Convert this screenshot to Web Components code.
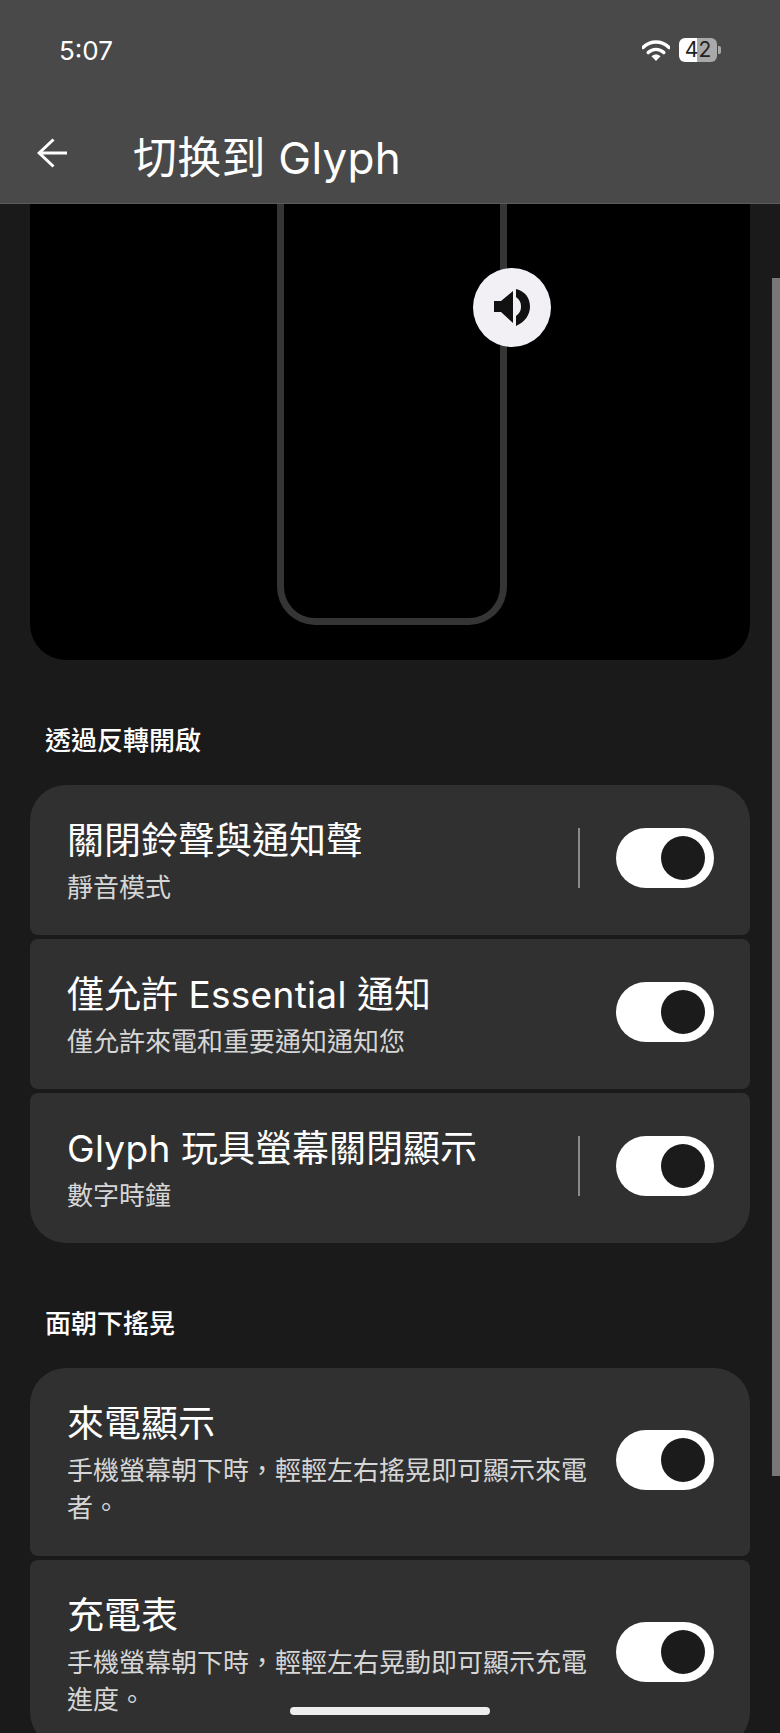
<!DOCTYPE html>
<html lang="zh-Hant">
<head>
<meta charset="utf-8">
<title>切换到 Glyph</title>
<style>
  html, body { margin: 0; padding: 0; background: #1a1a1a; }
  body { width: 780px; height: 1733px; overflow: hidden; position: relative;
    font-family: Inter, "Noto Sans CJK TC", sans-serif; color: #fff; }
  main { display: block; padding: 0 30px; }
  .en { letter-spacing: .3px; }
</style>
</head>
<body>
<top-bar heading="切换到 Glyph" time="5:07" battery="42"></top-bar>
<main>
  <hero-preview></hero-preview>

  <section-label>透過反轉開啟</section-label>
  <setting-row pos="first" divider>
    <span slot="title">關閉鈴聲與通知聲</span>
    <span slot="sub">靜音模式</span>
  </setting-row>
  <setting-row>
    <span slot="title">僅允許 <span class="en">Essential</span> 通知</span>
    <span slot="sub">僅允許來電和重要通知通知您</span>
  </setting-row>
  <setting-row pos="last" divider>
    <span slot="title"><span class="en">Glyph</span> 玩具螢幕關閉顯示</span>
    <span slot="sub">數字時鐘</span>
  </setting-row>

  <section-label>面朝下搖晃</section-label>
  <setting-row pos="first" tall>
    <span slot="title">來電顯示</span>
    <span slot="sub">手機螢幕朝下時，輕輕左右搖晃即可顯示來電者。</span>
  </setting-row>
  <setting-row pos="last" tall>
    <span slot="title">充電表</span>
    <span slot="sub">手機螢幕朝下時，輕輕左右晃動即可顯示充電進度。</span>
  </setting-row>
</main>
<scroll-thumb></scroll-thumb>
<home-pill></home-pill>

<script>
(function(){
  class topBar extends HTMLElement {
    connectedCallback () {
      const root = this.attachShadow({mode: 'open'});
      root.innerHTML = `
        <style>
        :host { display: block; height: 204px; background: #494949; border-bottom: 1px solid #5c5c5c; box-sizing: border-box; color: #fff; position: relative; z-index: 2; }
        .status { height: 100px; display: flex; align-items: center; justify-content: space-between; padding: 0 59px 0 59px; box-sizing: border-box; }
        .time { font-size: 26px; line-height: 30px; padding-top: 2px; }
        .icons { display: flex; align-items: center; gap: 9px; }
        .battery { width: 38px; height: 24px; border-radius: 6px; display: flex; align-items: center; justify-content: center;
          background: linear-gradient(90deg, #fff 0 18px, #a9a9a9 18px); color: #222; font-size: 21px; line-height: 24px; }
        .tip { width: 3px; height: 8px; background: #a9a9a9; border-radius: 0 2px 2px 0; margin-left: -8px; }
        .bar { height: 103px; display: flex; align-items: flex-start; padding: 28px 0 0 37px; box-sizing: border-box; }
        .bar svg { flex: none; display: block; margin-top: 10px; }
        h1 { margin: 0 0 0 66px; font-size: 44px; line-height: 60px; font-weight: 400; white-space: nowrap; letter-spacing: .25px; }
        </style>
        <div class="status">
          <span class="time">${this.getAttribute('time')}</span>
          <span class="icons">
            <svg width="28" height="21" viewBox="0 0 28 21">
              <path d="M1 7.5C8.5 .2 19.5 .2 27 7.5" fill="none" stroke="#fff" stroke-width="3.4" stroke-linecap="round"/>
              <path d="M6.2 12.6c4.6-4.3 11-4.3 15.6 0" fill="none" stroke="#fff" stroke-width="3.4" stroke-linecap="round"/>
              <path d="M9.5 16.2c2.8-2.2 6.2-2.2 9 0L14 21z" fill="#fff"/>
            </svg>
            <span class="battery">${this.getAttribute('battery')}</span>
            <span class="tip"></span>
          </span>
        </div>
        <div class="bar">
          <svg width="30" height="30" viewBox="0 0 30 30">
            <path d="M16.5 1.5 2.2 15l14.3 13.5M2.2 15H30" fill="none" stroke="#fff" stroke-width="3"/>
          </svg>
          <h1>${this.getAttribute('heading')}</h1>
        </div>
      `;
    }
  }
  window.customElements.define('top-bar', topBar);

  class heroPreview extends HTMLElement {
    connectedCallback () {
      const root = this.attachShadow({mode: 'open'});
      root.innerHTML = `
        <style>
        :host { display: flex; justify-content: center; height: 456px; background: #000; border-radius: 0 0 36px 36px; padding-left: 4px; box-sizing: border-box; }
        .phone { position: relative; width: 230px; height: 421px; box-sizing: border-box; border: 7px solid #353535; border-top: 0; border-radius: 0 0 38px 38px; }
        .bubble { position: absolute; left: 189px; top: 64px; width: 78px; height: 79px; border-radius: 50%; background: #f2f0f5; display: flex; align-items: center; justify-content: center; }
        svg { display: block; }
        </style>
        <div class="phone">
          <div class="bubble">
            <svg width="36" height="37" viewBox="0 0 36 37">
              <path d="M0 12h7L19 2v32L7 23H0z" fill="#111"/>
              <path d="M22 0C31 2 36 9 36 17.5S31 33 22 37V27C26 24 27 21 27 17.5S26 11 22 8z" fill="#111"/>
            </svg>
          </div>
        </div>
      `;
    }
  }
  window.customElements.define('hero-preview', heroPreview);

  class sectionLabel extends HTMLElement {
    connectedCallback () {
      const root = this.attachShadow({mode: 'open'});
      root.innerHTML = `
        <style>
        :host { display: block; margin: 64px 0 27px; padding-left: 15px; font-size: 26px; line-height: 34px; font-weight: 500; color: #fff; }
        </style>
        <slot></slot>
      `;
    }
  }
  window.customElements.define('section-label', sectionLabel);

  class toggleSwitch extends HTMLElement {
    connectedCallback () {
      const root = this.attachShadow({mode: 'open'});
      root.innerHTML = `
        <style>
        :host { display: flex; justify-content: flex-end; align-items: center; flex: none; width: 98px; height: 60px; border-radius: 30px; background: #fff; padding-right: 9px; box-sizing: border-box; }
        i { display: block; width: 44px; height: 44px; border-radius: 50%; background: #1b1b1b; }
        </style>
        <i></i>
      `;
    }
  }
  window.customElements.define('toggle-switch', toggleSwitch);

  class settingRow extends HTMLElement {
    connectedCallback () {
      const root = this.attachShadow({mode: 'open'});
      root.innerHTML = `
        <style>
        :host { display: flex; align-items: center; background: #303030; margin-bottom: 4px; padding: 31px 36px 29px 37px; border-radius: 8px; box-sizing: border-box; }
        :host([pos="first"]) { border-radius: 36px 36px 8px 8px; }
        :host([pos="last"]) { border-radius: 8px 8px 36px 36px; margin-bottom: 0; }
        :host([tall]) { padding-bottom: 30px; }
        .text { flex: 1; min-width: 0; padding-right: 24px; }
        .title { font-size: 37px; line-height: 50px; color: #fff; white-space: nowrap; }
        .sub { margin-top: 3px; font-size: 26px; line-height: 37px; color: #d6d6d6; }
        .end { display: flex; align-items: center; flex: none; margin-bottom: 6px; }
        :host([tall]) .end { margin-bottom: 5px; }
        .rule { display: none; width: 2px; height: 60px; background: #8a8a8a; margin-right: 36px; }
        :host([divider]) .rule { display: block; }
        </style>
        <div class="text">
          <div class="title"><slot name="title"></slot></div>
          <div class="sub"><slot name="sub"></slot></div>
        </div>
        <div class="end">
          <span class="rule"></span>
          <toggle-switch></toggle-switch>
        </div>
      `;
    }
  }
  window.customElements.define('setting-row', settingRow);

  class scrollThumb extends HTMLElement {
    connectedCallback () {
      const root = this.attachShadow({mode: 'open'});
      root.innerHTML = `
        <style>
        :host { position: absolute; left: 772px; top: 278px; width: 8px; height: 1198px; background: #777; }
        </style>
      `;
    }
  }
  window.customElements.define('scroll-thumb', scrollThumb);

  class homePill extends HTMLElement {
    connectedCallback () {
      const root = this.attachShadow({mode: 'open'});
      root.innerHTML = `
        <style>
        :host { position: absolute; left: 290px; top: 1707px; width: 200px; height: 8px; border-radius: 4px; background: #eee; }
        </style>
      `;
    }
  }
  window.customElements.define('home-pill', homePill);
})();
</script>
</body>
</html>
